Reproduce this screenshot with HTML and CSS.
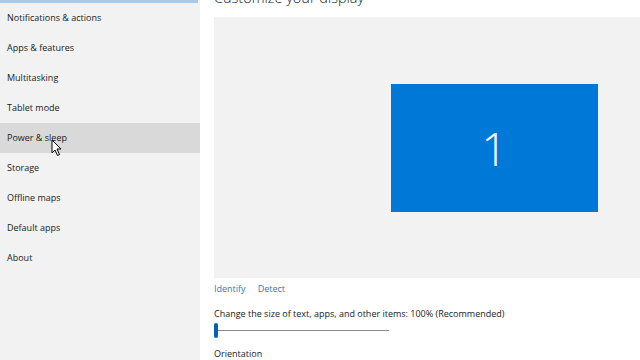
FILE: index.html
```html
<!DOCTYPE html>
<html lang="en">
<head>
  <meta charset="UTF-8">
  <title>Settings - Display</title>
  <link rel="stylesheet" href="styles.css">
</head>
<body>
  <aside class="sidebar">
    <div class="selected-edge"></div>
    <ul class="nav-list">
      <li>Notifications &amp; actions</li>
      <li>Apps &amp; features</li>
      <li>Multitasking</li>
      <li>Tablet mode</li>
      <li class="hover">Power &amp; sleep
        <svg class="cursor" width="12" height="18" viewBox="0 0 12 18">
          <path d="M1 1 L1 14 L4 11 L6.5 16.5 L8.5 15.5 L6 10 L10 10 Z" fill="#fff" stroke="#000" stroke-width="1" stroke-linejoin="round"/>
        </svg>
      </li>
      <li>Storage</li>
      <li>Offline maps</li>
      <li>Default apps</li>
      <li>About</li>
    </ul>
  </aside>
  <main class="content">
    <h1 class="page-title">Customize your display</h1>
    <div class="preview">
      <div class="monitor">1</div>
    </div>
    <div class="links">
      <a href="#">Identify</a>
      <a href="#">Detect</a>
    </div>
    <p class="label">Change the size of text, apps, and other items: 100% (Recommended)</p>
    <div class="slider">
      <span class="thumb"></span>
      <span class="track"></span>
    </div>
    <p class="label">Orientation</p>
  </main>
</body>
</html>
```

FILE: styles.css
```css
/* General */
html, body {
  margin: 0;
  padding: 0;
  height: 100%;
  overflow: hidden;
  font-family: "Open Sans", "Noto Sans", Arial, sans-serif;
  color: #000;
}
body {
  display: flex;
  background: #fff;
}

/* Sidebar */
.sidebar {
  width: 200px;
  flex-shrink: 0;
  background: #f2f2f2;
  position: relative;
}
.selected-edge {
  height: 3px;
  width: 198px;
  background: #a9c9ea;
}
.nav-list {
  list-style: none;
  margin: 0;
  padding: 0;
}
.nav-list li {
  height: 30px;
  line-height: 30px;
  padding-left: 7px;
  font-size: 9px;
  color: #1a1a1a;
  position: relative;
}
.nav-list li.hover {
  background: #d9d9d9;
}
.cursor {
  position: absolute;
  left: 51px;
  top: 16px;
}

/* Content */
.content {
  flex: 1;
  padding-left: 14px;
  overflow: hidden;
}
.page-title {
  margin: -12px 0 0;
  height: 29px;
  line-height: 20px;
  font-size: 14.5px;
  font-weight: 300;
  color: #222;
  white-space: nowrap;
}
.preview {
  height: 261px;
  background: #f2f2f2;
  display: flex;
  align-items: flex-start;
  padding: 67px 0 0 177px;
  box-sizing: border-box;
}
.monitor {
  width: 207px;
  height: 128px;
  background: #0078d7;
  color: #fff;
  font-size: 46px;
  font-weight: 300;
  display: flex;
  align-items: center;
  justify-content: center;
}
.links {
  display: flex;
  gap: 12px;
  margin-top: 2px;
  height: 17px;
  line-height: 17px;
}
.links a {
  color: #2b7bc4;
  text-decoration: none;
  font-size: 9px;
}
.label {
  margin: 0;
  font-size: 9px;
  color: #1a1a1a;
  line-height: 17px;
}
.links + .label {
  margin-top: 8px;
}
.slider {
  display: flex;
  align-items: center;
  height: 16px;
  margin: 0 0 7px;
}
.thumb {
  width: 4px;
  height: 15px;
  border-radius: 2px;
  background: #0063b1;
}
.track {
  width: 171px;
  height: 1px;
  background: #8a8a8a;
}
```
